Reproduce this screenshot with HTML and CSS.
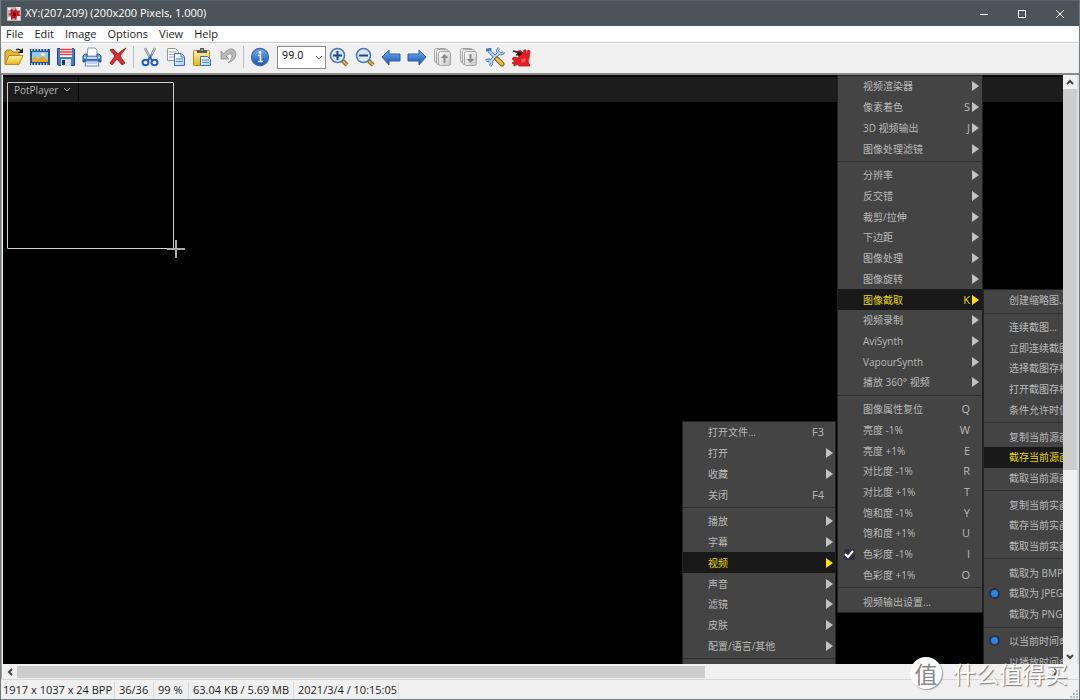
FILE: index.html
```html
<!DOCTYPE html>
<html lang="zh-CN">
<head>
<meta charset="utf-8">
<title>XY:(207,209) (200x200 Pixels, 1.000)</title>
<link rel="stylesheet" href="styles.css">
</head>
<body>
<svg class="defs" aria-hidden="true">
  <defs>
    <linearGradient id="gold" x2="0" y2="1"><stop stop-color="#fff3a5"/><stop offset="1" stop-color="#e9b21c"/></linearGradient>
    <linearGradient id="blue" x2="0" y2="1"><stop stop-color="#77b1f3"/><stop offset="1" stop-color="#1551b5"/></linearGradient>
    <linearGradient id="paper" x2="1" y2="1"><stop stop-color="#fff"/><stop offset="1" stop-color="#a9cbf4"/></linearGradient>
    <linearGradient id="grey" x2="1" y2="1"><stop stop-color="#fff"/><stop offset="1" stop-color="#c6c6c6"/></linearGradient>
  </defs>
</svg>
<div class="window">
  <header class="titlebar">
    <svg class="app-icon" viewBox="0 0 14 14"><rect width="14" height="14" fill="#b9b4b4"/><path d="M1 1h3v2H1zM9 0h4v3H9zM1 10h3v3H1zM10 9h3v4h-3z" fill="#f2e8e8"/><path d="M5 2l2 2 2-3 1 3 3 0-1 3 2 2-4 0-1 4-2-2-3 2 0-4-3-2 3-1-1-3z" fill="#c41c22"/><path d="M6 5l3 1 0 3-3 0z" fill="#7d080e"/></svg>
    <h1 class="title">XY:(207,209) (200x200 Pixels, 1.000)</h1>
    <div class="window-buttons">
      <button aria-label="Minimize"><svg viewBox="0 0 10 10"><path d="M1 5.500h8"/></svg></button>
      <button aria-label="Maximize"><svg viewBox="0 0 10 10"><path d="M1.500 1.500h7v7h-7z"/></svg></button>
      <button aria-label="Close"><svg viewBox="0 0 10 10"><path d="M1 1l8 8M9 1l-8 8"/></svg></button>
    </div>
  </header>
  <nav class="menubar">
    <button>File</button><button>Edit</button><button>Image</button><button>Options</button><button>View</button><button>Help</button>
  </nav>
  <div class="toolbar">
    <button aria-label="Open"><svg viewBox="0 0 20 20"><path d="M1 17V5l2-2h4l2 2h6v4" fill="#e6b437" stroke="#a87b12"/><path d="M1 17.500l4-9h14l-4 9z" fill="url(#gold)" stroke="#b98a14"/><path d="M12 3q3-2 5 1" fill="none" stroke="#222" stroke-width="1.400"/><path d="M19 1v5h-5z" fill="#222"/></svg></button>
    <button aria-label="Slideshow"><svg viewBox="0 0 20 20"><path d="M0 2h20v16H0z" fill="#29558f"/><path d="M1 3h18M1 17h18" stroke="#cfe0f5" stroke-width="1.500" stroke-dasharray="1.500 1.500"/><path d="M2 5h16v10H2z" fill="#8ecbfa"/><path d="M2 15v-3l3-3 3 3 4-3 6 4v2z" fill="#e6a825"/><circle cx="13" cy="7.500" r="1.800" fill="#fff09a"/></svg></button>
    <button aria-label="Save"><svg viewBox="0 0 20 20"><path d="M1.500 1.500h16l1 1v16h-16l-1-1z" fill="#3c7fcf" stroke="#1d4787"/><path d="M4 1h12v9H4z" fill="#fff"/><path d="M4 2.500h12M4 5h12M4 7.500h12" stroke="#dc3b42" stroke-width="1.300"/><path d="M5 12h10v7H5z" fill="#dcdfe4"/><path d="M6 13h3v5H6z" fill="#24395d"/></svg></button>
    <button aria-label="Print"><svg viewBox="0 0 20 20"><path d="M5 9l1-8h7l2 2v6z" fill="#fff" stroke="#8399b5"/><path d="M1 9l2-2h2v3h10V7h2l2 2v6H1z" fill="url(#blue)" stroke="#395b90"/><path d="M2 10.500h2M16 10.500h2" stroke="#d7e1f0" stroke-width="2"/><path d="M5 10h10v2H5z" fill="#c3d7f2"/><path d="M4 14h12l1 5H3z" fill="#eff5fd" stroke="#6a8cbd"/><path d="M5 16h10" stroke="#94aed4"/></svg></button>
    <button aria-label="Delete"><svg viewBox="0 0 20 20"><path d="M2 3l3-1 5 5q4-4 8-6-3 4-6 8l5 7-3 2-5-6-5 6-2-2 5-7z" fill="#d92d32" stroke="#9a1015" stroke-width=".8"/></svg></button>
    <span class="divider"></span>
    <button aria-label="Cut"><svg viewBox="0 0 20 20"><path d="M5 1l6 12M15 1L9 13" stroke="#7d8995" stroke-width="2.500"/><path d="M5 1l6 12M15 1l-3 6" stroke="#c2cdd8"/><ellipse cx="5.500" cy="15.500" rx="3" ry="2.800" fill="none" stroke="#205ec4" stroke-width="2"/><ellipse cx="14.500" cy="15.500" rx="3" ry="2.800" fill="none" stroke="#205ec4" stroke-width="2"/><path d="M8 13l2-3 2 3" fill="none" stroke="#205ec4" stroke-width="1.500"/></svg></button>
    <button aria-label="Copy"><svg viewBox="0 0 20 20"><path d="M1.500 1.500h8l3 3v9h-11z" fill="#f4f5f8" stroke="#9298a2"/><path d="M3 5h7M3 7.500h7M3 10h7" stroke="#a4abb6"/><path d="M8.500 6.500h7l3 3v9h-10z" fill="url(#paper)" stroke="#3972b8"/><path d="M15 7v3h3M10 12h7M10 14.500h7" fill="none" stroke="#4f88cd"/></svg></button>
    <button aria-label="Paste"><svg viewBox="0 0 20 20"><rect x="1.500" y="3.500" width="16" height="15" rx="1" fill="url(#gold)" stroke="#b58515"/><path d="M5 6V3h3V1h4v2h3v3z" fill="#565a5e"/><path d="M9 3h2" stroke="#ddd"/><path d="M8.500 9.500h7l3 3v6h-10z" fill="url(#paper)" stroke="#3972b8"/><path d="M10 13h7M10 15.500h7" stroke="#4f88cd"/></svg></button>
    <button aria-label="Undo"><svg viewBox="0 0 20 20"><path d="M3 4v8h8l-3-3q5-4 6-1 1 4-4 8 8-3 8-9-1-6-6-5-4 1-6 5z" fill="#b9b9b9" stroke="#8f8f8f" stroke-width=".8"/></svg></button>
    <span class="divider"></span>
    <button aria-label="Information"><svg viewBox="0 0 20 20"><circle cx="10" cy="10" r="8.500" fill="url(#blue)" stroke="#3e68a9" stroke-width="1.300"/><circle cx="10" cy="5.500" r="1.400" fill="#fff"/><path d="M8 8.500h2.500v6M8 14.500h5" fill="none" stroke="#fff" stroke-width="1.500"/></svg></button>
    <div class="zoom">
      <select aria-label="Zoom"><option>99.0</option></select>
      <svg viewBox="0 0 8 6"><path d="M1 1l3 3 3-3"/></svg>
    </div>
    <button aria-label="Zoom in"><svg viewBox="0 0 20 20"><path d="M13 13l5 5" stroke="#8a6720" stroke-width="4"/><path d="M14 14l4 4" stroke="#e1b43c" stroke-width="2"/><circle cx="8.500" cy="8.500" r="7" fill="#d5e8ff" stroke="#4779bd" stroke-width="1.600"/><path d="M4 8.500h9M8.500 4v9" stroke="#1b4586" stroke-width="2"/></svg></button>
    <button aria-label="Zoom out"><svg viewBox="0 0 20 20"><path d="M13 13l5 5" stroke="#8a6720" stroke-width="4"/><path d="M14 14l4 4" stroke="#e1b43c" stroke-width="2"/><circle cx="8.500" cy="8.500" r="7" fill="#d5e8ff" stroke="#4779bd" stroke-width="1.600"/><path d="M4 8.500h9" stroke="#1b4586" stroke-width="2"/></svg></button>
    <button aria-label="Previous"><svg viewBox="0 0 20 20"><path d="M1 10l7-7v4h11v7H8v4z" fill="url(#blue)" stroke="#3260a4"/></svg></button>
    <button aria-label="Next"><svg viewBox="0 0 20 20"><path d="M19 10l-7-7v4H1v7h11v4z" fill="url(#blue)" stroke="#3260a4"/></svg></button>
    <button aria-label="Previous page"><svg viewBox="0 0 20 20"><g fill="url(#grey)" stroke="#a3a3a3"><rect x="1.500" y="1.500" width="12" height="14" rx="2"/><rect x="3.500" y="2.500" width="12" height="15" rx="2"/><rect x="5.500" y="4.500" width="12" height="14" rx="2"/></g><path d="M11.500 7l4 4h-3v5h-2v-5h-3z" fill="#898989"/></svg></button>
    <button aria-label="Next page"><svg viewBox="0 0 20 20"><g fill="url(#grey)" stroke="#a3a3a3"><rect x="1.500" y="1.500" width="12" height="14" rx="2"/><rect x="3.500" y="2.500" width="12" height="15" rx="2"/><rect x="5.500" y="4.500" width="12" height="14" rx="2"/></g><path d="M11.500 16l-4-4h3V7h2v5h3z" fill="#898989"/></svg></button>
    <button aria-label="Properties"><svg viewBox="0 0 20 20"><path d="M4 16L15 5M4 4l8 8" stroke="#4776b5" stroke-width="3.500"/><path d="M14 1q-3 3 0 5t5-1M1 14q3-2 5 0t-1 5M1 3l4 0 0-2" fill="none" stroke="#4776b5" stroke-width="2.800"/><path d="M4 16L15 5M4 4l8 8" stroke="#b8d7f8" stroke-width="1.800"/><path d="M14 1q-3 3 0 5t5-1M1 14q3-2 5 0t-1 5" fill="none" stroke="#b8d7f8" stroke-width="1.200"/><path d="M12 12l5 5" stroke="#82601a" stroke-width="5" stroke-linecap="round"/><path d="M12 12l5 5" stroke="#f0c13d" stroke-width="3" stroke-linecap="round"/></svg></button>
    <button aria-label="About"><svg viewBox="0 0 20 20"><path d="M1 12l2-2 4 1 1-2-2-4 3-2 3 3 1-3 2 0 0 5 2-5 2 1-1 7-1 3 2 5H8l-1-2-4 2 0-2-2-1 3-2z" fill="#e61d22" stroke="#c41218" stroke-width=".8"/><path d="M2 4l4 1 5 2M5 8l6-2M6 5l3 4" fill="none" stroke="#342022" stroke-width="1.800"/><path d="M10 12l4-1 1 3-4 2z" fill="#ff5555"/></svg></button>
  </div>
  <main class="viewer">
    <div class="canvas">
      <div class="player-bar"><button class="player-name">PotPlayer <svg viewBox="0 0 8 6"><path d="M1 1l3 3 3-3"/></svg></button></div>
      <div class="selection"></div>
      <svg class="cross" viewBox="0 0 18 18"><path d="M9 0v18M0 9h18"/></svg>

      <div class="menu menu-main">
        <button>打开文件...<kbd>F3</kbd></button>
        <button class="sub">打开</button>
        <button class="sub">收藏</button>
        <button>关闭<kbd>F4</kbd></button>
        <hr>
        <button class="sub">播放</button>
        <button class="sub">字幕</button>
        <button class="sub active">视频</button>
        <button class="sub">声音</button>
        <button class="sub">滤镜</button>
        <button class="sub">皮肤</button>
        <button class="sub">配置/语言/其他</button>
        <hr>
      </div>

      <div class="menu menu-video">
        <button class="sub">视频渲染器</button>
        <button class="sub">像素着色<kbd>S</kbd></button>
        <button class="sub">3D 视频输出<kbd>J</kbd></button>
        <button class="sub">图像处理滤镜</button>
        <hr>
        <button class="sub">分辨率</button>
        <button class="sub">反交错</button>
        <button class="sub">裁剪/拉伸</button>
        <button class="sub">下边距</button>
        <button class="sub">图像处理</button>
        <button class="sub">图像旋转</button>
        <button class="sub active">图像截取<kbd>K</kbd></button>
        <button class="sub">视频录制</button>
        <button class="sub">AviSynth</button>
        <button class="sub">VapourSynth</button>
        <button class="sub">播放 360° 视频</button>
        <hr>
        <button>图像属性复位<kbd>Q</kbd></button>
        <button>亮度 -1%<kbd>W</kbd></button>
        <button>亮度 +1%<kbd>E</kbd></button>
        <button>对比度 -1%<kbd>R</kbd></button>
        <button>对比度 +1%<kbd>T</kbd></button>
        <button>饱和度 -1%<kbd>Y</kbd></button>
        <button>饱和度 +1%<kbd>U</kbd></button>
        <label><input type="checkbox" checked><svg class="tick" viewBox="0 0 12 12"><path d="M2 6l3 3 5-6"/></svg>色彩度 -1%<kbd>I</kbd></label>
        <button>色彩度 +1%<kbd>O</kbd></button>
        <hr>
        <button>视频输出设置...</button>
      </div>

      <div class="menu menu-capture">
        <button>创建缩略图...</button>
        <hr>
        <button>连续截图...</button>
        <button>立即连续截图</button>
        <button>选择截图存档</button>
        <button>打开截图存档</button>
        <button>条件允许时值</button>
        <hr>
        <button>复制当前源画</button>
        <button class="active">截存当前源画</button>
        <button>截取当前源画</button>
        <hr>
        <button>复制当前实画</button>
        <button>截存当前实画</button>
        <button>截取当前实画</button>
        <hr>
        <button>截取为 BMP</button>
        <label><input type="radio" name="format" checked>截取为 JPEG</label>
        <button>截取为 PNG</button>
        <hr>
        <label><input type="radio" name="naming" checked>以当前时间命</label>
        <button>以播放时间命</button>
      </div>
    </div>
    <div class="scroll scroll-y">
      <button aria-label="Scroll up"><svg viewBox="0 0 8 8"><path d="M1 6l3-3 3 3"/></svg></button>
      <div class="track"><div class="thumb"></div></div>
      <button aria-label="Scroll down"><svg viewBox="0 0 8 8"><path d="M1 2l3 3 3-3"/></svg></button>
    </div>
    <div class="scroll scroll-x">
      <button aria-label="Scroll left"><svg viewBox="0 0 8 8"><path d="M6 1L3 4l3 3"/></svg></button>
      <div class="track"><div class="thumb"></div><div class="rest"></div></div>
      <button aria-label="Scroll right"><svg viewBox="0 0 8 8"><path d="M2 1l3 3-3 3"/></svg></button>
    </div>
  </main>
  <footer class="statusbar">
    <span>1917 x 1037 x 24 BPP</span><span>36/36</span><span>99 %</span><span>63.04 KB / 5.69 MB</span><span>2021/3/4 / 10:15:05</span>
    <svg class="grip" viewBox="0 0 8 8"><path d="M6 0h2v2H6zM3 3h2v2H3zM6 3h2v2H6zM0 6h2v2H0zM3 6h2v2H3zM6 6h2v2H6z"/></svg>
  </footer>
  <div class="watermark"><span class="mark">值</span><span>什么值得买</span></div>
</div>
</body>
</html>
```
FILE: styles.css
```css
* { box-sizing: border-box; }
html, body { height: 100%; margin: 0; }
body { font: 11px/16px "Open Sans", "Noto Sans CJK SC", sans-serif; color: #1c1c1c; }
button { font: inherit; color: inherit; border: 0; background: none; padding: 0; margin: 0; }
.defs { position: absolute; width: 0; height: 0; }
.window { position: relative; display: flex; flex-direction: column; height: 100%; overflow: hidden; background: #f0f0f0; border: solid #6f7b7d; border-width: 0 1px 1px; }

.titlebar { display: flex; align-items: center; flex: 0 0 26px; padding-left: 6px; background: #4b545a; border-top: 1px solid #59656b; color: #fff; }
.app-icon { width: 14px; height: 14px; }
.title { flex: 1; margin: 0 0 0 4px; padding-bottom: 1px; font-size: 11px; font-weight: 400; }
.window-buttons { display: flex; }
.window-buttons button { display: grid; place-items: center; width: 38px; height: 24px; }
.window-buttons svg { width: 10px; height: 10px; fill: none; stroke: #fff; }

.menubar { display: flex; flex: 0 0 17px; padding-left: 5px; gap: 11px; background: #fff; border-bottom: 1px solid #c8c8c8; }
.toolbar { display: flex; align-items: center; flex: 0 0 32px; padding-bottom: 3px; border-bottom: 2px solid #8a8a8a; border-top: 1px solid #fff; }
.toolbar button { display: grid; place-items: center; flex: 0 0 26px; height: 26px; }
.toolbar button svg { width: 20px; height: 20px; }
.divider { flex: 0 0 2px; height: 22px; margin: 0 2px; background: #bdbdbd; border-right: 1px solid #f0f0f0; }
.zoom { position: relative; flex: 0 0 49px; margin-left: 4px; }
.zoom select { appearance: none; display: block; width: 100%; height: 23px; padding: 0 4px 3px; border: 1px solid #8a8a8a; border-radius: 0; background: #fff; color: #222; font: 11px/16px Roboto, sans-serif; }
.zoom svg { position: absolute; right: 3px; top: 9px; width: 8px; height: 6px; fill: none; stroke: #777; pointer-events: none; }

.viewer { flex: 1; min-height: 0; display: grid; grid-template: 1fr 15px / 1fr 16px; padding-left: 1px; border-left: 1px solid #a5a5a5; }
.canvas { position: relative; overflow: hidden; background: #000; }
.player-bar { height: 27px; background: #1c1c1c; border-top: 2px solid #080808; color: #b4b4b4; }
.player-name { display: flex; align-items: center; gap: 5px; height: 25px; padding: 0 7px 0 11px; border-right: 1px solid #080808; font-size: 10px; }
.player-name svg { width: 8px; height: 6px; fill: none; stroke: #aaa; }
.selection { position: absolute; left: 4px; top: 7px; width: 167px; height: 167px; border: 1px solid #d0d0d0; border-radius: 1px; }
.cross { position: absolute; left: 164px; top: 165px; width: 18px; height: 18px; stroke: #aaa; stroke-width: 2; }

.menu { position: absolute; display: flex; flex-direction: column; background: #444; color: #b9b9b9; box-shadow: 0 0 0 1px #222; }
.menu-main { left: 680px; top: 347px; width: 152px; height: 243px; padding-bottom: 3px; }
.menu-video { left: 835px; top: 1px; width: 144px; height: 536px; }
.menu-capture { left: 981px; top: 215px; width: 144px; height: 382px; }
.menu button, .menu label { position: relative; display: flex; align-items: center; flex: 1 1 0; min-height: 0; padding: 0 12px 0 25px; font-size: 10px; line-height: 16px; white-space: nowrap; }
.menu kbd { margin-left: auto; font: 11px/16px "Open Sans", sans-serif; }
.menu .sub::after { content: ""; position: absolute; right: 3px; top: calc(50% - 5px); border: solid transparent; border-width: 5px 0 5px 7px; border-left-color: #c2c2c2; }
.menu .active { background: #191919; color: #e6d800; }
.menu .active::after { border-left-color: #ffe100; }
.menu hr { flex: 0 0 6px; width: 100%; margin: 0; border: solid #444; border-width: 2px 0 3px; background: #303030; }
.menu input { position: absolute; appearance: none; left: 6px; margin: 0; width: 11px; height: 11px; background: #303040; border-radius: 2px; }
.menu input[type="radio"] { left: 5px; border: 2px solid #303040; border-radius: 50%; background: #2486f5; }
.tick { position: absolute; left: 5px; width: 12px; height: 12px; fill: none; stroke: #fff; stroke-width: 2; }
.menu-main button { padding-right: 11px; }
.menu-main .sub::after { right: 2px; }

.scroll { display: flex; background: #f0f0f0; }
.scroll button { display: grid; place-items: center; flex: 0 0 14px; }
.scroll svg { width: 8px; height: 8px; fill: none; stroke: #444; stroke-width: 2; }
.track { flex: 1; display: flex; flex-direction: inherit; }
.thumb { background: #cdcdcd; }
.scroll-y { flex-direction: column; border-right: 2px solid #ddd; }
.scroll-y .thumb { height: 68%; }
.scroll-x { border: solid #f0f0f0; border-width: 2px 0 1px; }
.scroll-x .thumb { flex: 2; }
.rest { flex: 1; }

.statusbar { position: relative; display: grid; grid-template-columns: 114px 39px 35px 105px 105px; align-items: center; flex: 0 0 20px; border-top: 1px solid #d7d7d7; }
.statusbar span { padding-left: 4px; border-right: 1px solid #d7d7d7; white-space: nowrap; }
.statusbar span:first-child { padding-left: 2px; }
.grip { position: absolute; right: 1px; bottom: 1px; width: 8px; height: 8px; fill: #bbb; }

.watermark { position: absolute; right: 11px; bottom: 10px; display: flex; align-items: center; gap: 11px; color: #fff; font: 23px/32px "Noto Sans CJK SC", sans-serif; text-shadow: 1px 1px 1px #777; pointer-events: none; }
.mark { width: 32px; height: 32px; text-align: center; border-radius: 50%; background: #fff; color: #888; text-shadow: none; box-shadow: 1px 1px 1px #999; }
```
